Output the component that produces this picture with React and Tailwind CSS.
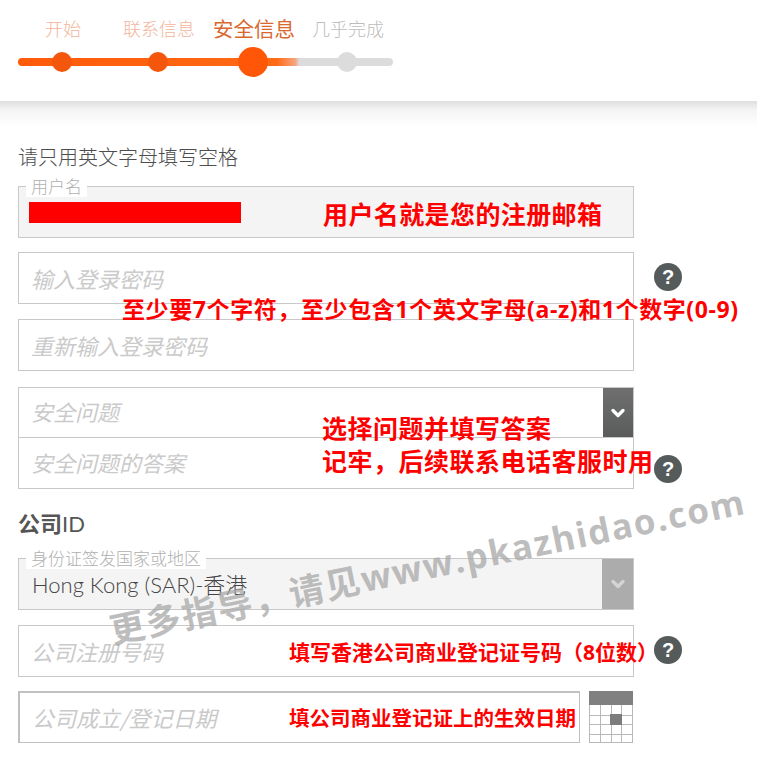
import { ChevronDown } from 'lucide-react';

const cjk = "font-['Noto_Sans_CJK_SC',sans-serif]";
const lato = "font-['Lato','Noto_Sans_CJK_SC',sans-serif]";
const note = "absolute font-['Open_Sans','Noto_Sans_CJK_SC',sans-serif] font-bold text-[#f00] whitespace-nowrap leading-none";

function Field({ placeholder, className = '', textClass = '' }) {
    return (
        <div className={`h-[52px] w-[616px] border border-[#c8c8c8] flex items-center pl-[13px] ${className}`}>
            <span className={`-ml-px text-[22px] italic font-normal text-[#cacaca] leading-none ${textClass}`}>{placeholder}</span>
        </div>
    );
}

function Legend({ children }) {
    return (
        <span className="absolute left-[7px] -top-[12px] bg-white px-[5px] text-[17px] leading-[22px] font-light text-[#b0b0b0] whitespace-nowrap">
            {children}
        </span>
    );
}

function Help({ className = '' }) {
    return (
        <span className={`absolute size-[28px] rounded-full bg-[#555b5b] flex items-center justify-center text-white text-[20px] font-bold leading-none font-['Liberation_Sans',sans-serif] ${className}`}>
            ?
        </span>
    );
}

function Dot({ className }) {
    return <span className={`shrink-0 rounded-full ${className}`} />;
}

function CalendarIcon() {
    return (
        <svg width="44" height="52" viewBox="0 0 44 52" className="ml-[9px] shrink-0">
            <rect x="0.5" y="0.5" width="43" height="51" fill="#fff" stroke="#b8b8b8" />
            <g stroke="#b8b8b8" strokeWidth="1">
                <path d="M11.5 14V52M22.5 14V52M32.5 14V52M0 24.5H44M0 33.5H44M0 43.5H44" />
            </g>
            <rect x="0" y="0" width="44" height="14" fill="#808080" />
            <rect x="21" y="23" width="12" height="11" fill="#7c7c7c" />
        </svg>
    );
}

export default function App() {
    return (
        <div className={`relative w-[757px] h-[762px] overflow-hidden bg-white ${cjk}`}>
            {/* Stepper */}
            <div className="h-[101px] pl-[18px] pt-[16px]">
                <div className="flex items-center h-[24px] text-[18px] leading-none font-light">
                    <span className="ml-[27px] text-[#f3b59c]">开始</span>
                    <span className="ml-[42px] text-[#f3b59c]">联系信息</span>
                    <span className="ml-[18px] text-[20.5px] font-normal text-[#d9682e]">安全信息</span>
                    <span className="ml-[17px] text-[#bdbdbd]">几乎完成</span>
                </div>
                <div className="mt-[7px] h-[30px] w-[375px] relative flex items-center">
                    <div className="absolute inset-x-0 top-[11px] h-[8px] rounded-full bg-[linear-gradient(90deg,#ff5a0a_0%,#ff6a14_69%,#f6a680_74%,#dcdcdc_75%,#dcdcdc_100%)]" />
                    <Dot className="relative ml-[34px] size-[20px] bg-[#f4560c]" />
                    <Dot className="relative ml-[76px] size-[20px] bg-[#f4560c]" />
                    <Dot className="relative ml-[70px] size-[30px] bg-[#ff5608]" />
                    <Dot className="relative ml-[69px] size-[20px] bg-[#dcdcdc]" />
                </div>
            </div>

            {/* Shadow band */}
            <div className="h-[26px] bg-[linear-gradient(180deg,#dedede_0%,#f4f4f4_35%,#ffffff_100%)]" />

            <div className="pl-[18px]">
                <h2 className="mt-[15px] text-[20px] leading-[30px] font-light text-[#4d4d4d]">请只用英文字母填写空格</h2>

                <div className="relative mt-[14px] h-[52px] w-[616px] border border-[#c8c8c8] bg-[#f4f4f4]">
                    <Legend>用户名</Legend>
                    <div className="ml-[10px] mt-[15px] h-[21px] w-[212px] bg-[#f00]" />
                </div>

                <Field placeholder="输入登录密码" className="mt-[14px]" />
                <Field placeholder="重新输入登录密码" className="mt-[15px]" />

                <div className="relative mt-[16px] h-[51px] w-[616px] border border-[#c8c8c8] flex items-center pl-[13px]">
                    <span className="-ml-px -mt-[3px] text-[22px] italic font-normal text-[#cacaca] leading-none">安全问题</span>
                    <span className="absolute right-0 top-0 h-[49px] w-[30px] bg-[linear-gradient(180deg,#6f6f6f,#5a5c5c)] flex items-center justify-center">
                        <ChevronDown size={20} strokeWidth={4} className="text-white" />
                    </span>
                </div>
                <Field placeholder="安全问题的答案" className="-mt-px" textClass="-mt-[3px]" />

                <h2 className="mt-[18px] text-[22px] leading-[30px] font-bold text-[#555]">
                    公司<span className={`${lato} font-normal`}>ID</span>
                </h2>

                <div className="relative mt-[19px] h-[52px] w-[616px] border border-[#c8c8c8] bg-[#f4f4f4] flex items-center pl-[13px]">
                    <Legend>身份证签发国家或地区</Legend>
                    <span className={`${lato} mt-[2px] text-[22px] font-light leading-none text-[#444]`}>Hong Kong (SAR)-香港</span>
                    <span className="absolute right-0 top-0 h-[50px] w-[31px] bg-[#acacac] flex items-center justify-center">
                        <ChevronDown size={20} strokeWidth={4} className="text-[#d4d4d4]" />
                    </span>
                </div>

                <Field placeholder="公司注册号码" className="mt-[15px]" />

                <div className="mt-[14px] flex items-start">
                    <div className="h-[52px] w-[562px] border-2 border-[#c0c0c0] border-r border-b flex items-center pl-[13px]">
                        <span className="-ml-px -mt-px text-[22px] italic font-normal text-[#cacaca] leading-none">公司成立/登记日期</span>
                    </div>
                    <CalendarIcon />
                </div>
            </div>

            <Help className="left-[654px] top-[263px]" />
            <Help className="left-[654px] top-[455px]" />
            <Help className="left-[654px] top-[636px]" />

            {/* Red annotations on top of the form */}
            <span className={`${note} left-[323px] top-[202px] text-[25px] tracking-[0.4px]`}>用户名就是您的注册邮箱</span>
            <span className={`${note} left-[122px] top-[298px] text-[23px] tracking-[0.6px]`}>至少要7个字符，至少包含1个英文字母(a-z)和1个数字(0-9)</span>
            <span className={`${note} left-[322px] top-[416px] text-[25px] tracking-[0.5px]`}>选择问题并填写答案</span>
            <span className={`${note} left-[322px] top-[449px] text-[25px] tracking-[0.5px]`}>记牢，后续联系电话客服时用</span>
            <span className={`${note} left-[289px] top-[642px] text-[21px]`}>填写香港公司商业登记证号码（8位数）</span>
            <span className={`${note} left-[289px] top-[708px] text-[20.5px]`}>填公司商业登记证上的生效日期</span>

            {/* Watermark */}
            <span className="absolute left-[110px] top-[613px] origin-left -rotate-[11.6deg] whitespace-nowrap font-['Open_Sans','Noto_Sans_CJK_SC',sans-serif] font-bold text-[35px] tracking-[1.6px] leading-none text-[#a8a8a8]/75">
                更多指导，请见www.pkazhidao.com
            </span>
        </div>
    );
}
